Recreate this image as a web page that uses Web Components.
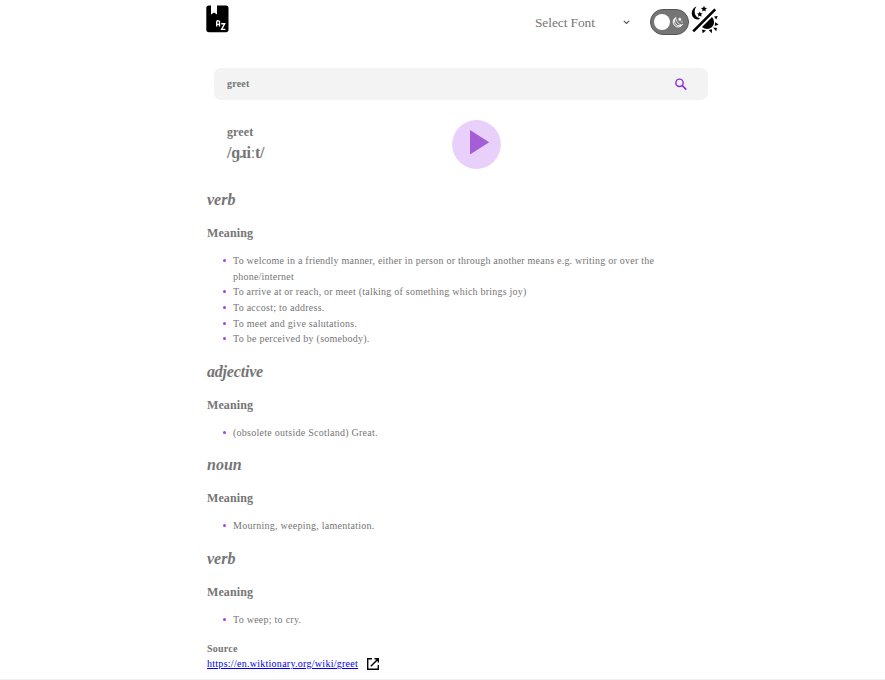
<!DOCTYPE html>
<html lang="en"><head><meta charset="utf-8"><title>Dictionary</title>
<style>
body{margin:0;background:#fff;color:#757575;font-family:"Liberation Serif",serif;height:680px;overflow:hidden}
</style></head><body>
<dictionary-app></dictionary-app>
<script>
const define=(name,html)=>customElements.define(name,class extends HTMLElement{
  constructor(){super();this.attachShadow({mode:'open'}).innerHTML=html}
});
define('book-logo',`<style>:host{display:block;width:23px;height:28px}svg{display:block}</style>
<svg width="23" height="28" viewBox="0 0 23 28"><path d="M3 .5H5V9.500L8 7.500 11 9.500V.5H20Q22.500.5 22.500 3V24.500Q22.500 27.300 20 27.300H3Q.3 27.300.3 24.500V3Q.3.5 3 .5Z"/><path d="M10.700 21.500V16.700Q10.700 15.700 12 15.700T13.500 16.700V21.500M10.700 19.300H13.500M15.200 18.700H18.700L15.600 24.300H19.300" fill="none" stroke="#fff" stroke-width="1.350"/></svg>`);
define('font-select',`<style>:host{display:flex;align-items:center;justify-content:space-between;width:95px;height:20px;font-size:13.333px;line-height:20px;letter-spacing:-.04px}svg{display:block;margin-top:-1px}</style><slot></slot><svg width="7" height="5" viewBox="0 0 7 5"><path d="M.8.8 3.500 3.500 6.200.8" fill="none" stroke="#555" stroke-width="1.200"/></svg>`);
define('theme-toggle',`<style>:host{display:flex;align-items:flex-start}.track{box-sizing:border-box;width:39px;height:26px;border:1px solid #555;border-radius:13px;background:#757575;display:flex;align-items:center;justify-content:space-between;padding:0 4px 0 3px;margin-top:4px}.knob{width:16px;height:16px;background:#fff;border-radius:50%}svg{display:block}.mode{margin-left:2px}</style>
<div class="track"><div class="knob"></div><svg width="12" height="12" viewBox="0 0 12 12"><path d="M4 1.500A5 5 0 1 0 10.500 8.500 4.700 4.700 0 0 1 4 1.500Z" fill="none" stroke="#fff"/><path d="M4 2.500Q4.500 7.500 9.500 9" fill="none" stroke="#fff" stroke-width=".8"/><path d="m7.800 1.200.6 1.300 1.400.2-1 1 .2 1.400-1.200-.7-1.200.7.2-1.400-1-1 1.400-.2Z" fill="#fff"/><circle cx="10" cy="6" r=".7" fill="#fff"/></svg></div>
<svg class="mode" width="28" height="30" viewBox="0 0 28 30"><path d="M5.500 1.200A7.400 7.400 0 0 0 1.600 11.500Q3.600 15 7.800 14.500L9 13.200Q5.500 12.800 4.200 9.500 2.700 5 5.500 1.200Z"/><path d="m13 .8.9 1.900 2.200.2-1.700 1.500.5 2.100-1.900-1.100-1.900 1.100.5-2.100-1.700-1.500 2.200-.2ZM8.800 6.400l.8 1.800 2 .2-1.500 1.400.5 2-1.800-1-1.800 1 .5-2L6 8.400l2-.2Z"/><path d="M2.200 26.300 24.200 4.300" stroke="#000" stroke-width="2.600"/><path d="M21 12A6.800 6.800 0 0 1 11 22ZM23 11.500l3.800-.5-1.600 3.400ZM24 17.200l3.600 2.200-3.800 1.600ZM22 22.500l4 .6-.8 3.200ZM17.700 25l3.300-.8-.2 4.100ZM11 24.500l4 .9-3.300 2.900Z"/></svg>`);
define('search-bar',`<style>:host{display:flex;box-sizing:border-box;height:32px;margin:0 7px;padding:0 20px 0 13px;background:#f3f3f3;border-radius:7px;align-items:center;justify-content:space-between;font:bold 10px/16px "Liberation Serif",serif;letter-spacing:.2px}svg{display:block}</style><slot></slot><svg width="14" height="14" viewBox="0 0 14 14"><circle cx="5.500" cy="5.800" r="3.700" fill="none" stroke="#8a2be2" stroke-width="1.400"/><path d="m8.300 8.600 4 4" stroke="#8a2be2" stroke-width="1.600"/></svg>`);
define('word-head',`<style>:host{display:grid;grid-template-columns:224.500px 49px;margin-left:20px;height:49px}.w{font-weight:bold;font-size:12px;line-height:18px;padding-top:3px;letter-spacing:.1px}.p{font-weight:bold;font-size:16px;line-height:24px;letter-spacing:-.25px}svg{display:block}</style><div><div class="w"><slot name="word"></slot></div><div class="p"><slot></slot></div></div><svg width="49" height="49" viewBox="0 0 49 49"><circle cx="24.500" cy="24.500" r="24.400" fill="#e8d0fa"/><path d="M18 10V34.500L37.200 22.200Z" fill="#a45ed8"/></svg>`);
define('word-sense',`<style>:host{display:block;padding-bottom:12.900px}h2{margin:0;font:italic bold 16px/24px "Liberation Serif",serif;letter-spacing:var(--title-spacing,0)}h3{margin:12px 0 0;font:bold 12px/18px "Liberation Serif",serif;letter-spacing:.1px}.list{margin-top:11.100px;padding-left:26px;font-size:10px;line-height:15.600px;letter-spacing:.255px}</style><h2><slot name="type"></slot></h2><h3>Meaning</h3><div class="list"><slot></slot></div>`);
define('sense-item',`<style>:host{display:block}:host::before{content:"";float:left;width:3px;height:3px;border-radius:50%;background:#a040f0;margin:6px 0 0 -10px}</style><slot></slot>`);
define('source-link',`<style>:host{display:block;font-size:10px;line-height:15.600px}.r{display:flex;align-items:center;height:15.600px}b{display:block;letter-spacing:.22px}a{color:#00e;text-decoration:underline;letter-spacing:.27px}svg{display:block;margin-left:8px}</style><b>Source</b><div class="r"><a href="#"><slot></slot></a><svg width="14" height="14" viewBox="0 0 14 14"><path d="M6 1.700H1.700V12.300H12.300V8M8.500 1.700H12.300V5.500M12.300 1.700 4.800 9.200" fill="none" stroke="#000" stroke-width="1.400"/></svg></div>`);
define('dictionary-app',`<style>:host{display:block;box-sizing:border-box;height:680px;border-bottom:1px solid #f0f0f0}main{width:508px;margin-left:207px}header{display:flex;align-items:flex-start;box-sizing:border-box;height:63px;margin-left:-1px;padding-top:5px;width:513px}font-select{margin:8px 20px 0 auto}theme-toggle{flex:none}search-bar{margin-top:5px}word-head{margin-top:19.500px}.s{margin-top:19.700px;width:460px}.adj{--title-spacing:-.2px}.wide{letter-spacing:.225px}source-link{margin-top:.2px}</style>
<main><header><book-logo></book-logo><font-select>Select Font</font-select><theme-toggle></theme-toggle></header><search-bar>greet</search-bar><word-head><span slot="word">greet</span>/ɡɹiːt/</word-head><div class="s">
<word-sense><span slot="type">verb</span><sense-item class="wide">To welcome in a friendly manner, either in person or through another means e.g. writing or over the phone/internet</sense-item><sense-item class="wide">To arrive at or reach, or meet (talking of something which brings joy)</sense-item><sense-item>To accost; to address.</sense-item><sense-item>To meet and give salutations.</sense-item><sense-item>To be perceived by (somebody).</sense-item></word-sense>
<word-sense class="adj"><span slot="type">adjective</span><sense-item>(obsolete outside Scotland) Great.</sense-item></word-sense>
<word-sense><span slot="type">noun</span><sense-item>Mourning, weeping, lamentation.</sense-item></word-sense>
<word-sense><span slot="type">verb</span><sense-item>To weep; to cry.</sense-item></word-sense></div>
<source-link>https://en.wiktionary.org/wiki/greet</source-link></main>`);
</script></body></html>
